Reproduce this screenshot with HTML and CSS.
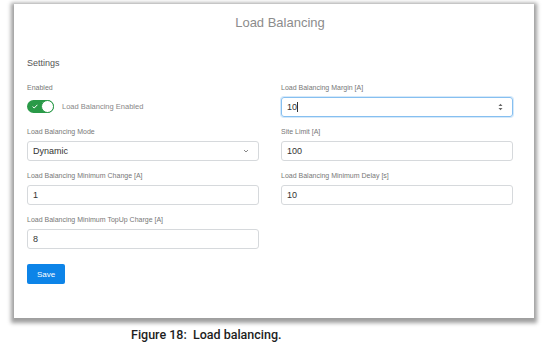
FILE: index.html
```html
<!DOCTYPE html>
<html lang="en">
<head>
  <meta charset="UTF-8">
  <meta name="viewport" content="width=device-width, initial-scale=1.0">
  <title>Load Balancing</title>
  <link rel="stylesheet" href="styles.css">
</head>
<body>
  <div class="card">
    <h1 class="title">Load Balancing</h1>
    <h2 class="section">Settings</h2>
    <div class="grid">
      <div class="field">
        <div class="label">Enabled</div>
        <div class="switch-row">
          <span class="switch">
            <svg class="check" width="6" height="5" viewBox="0 0 6 5"><path d="M0.6 2.6 L2.2 4 L5.4 0.8" fill="none" stroke="#fff" stroke-width="1"/></svg>
            <span class="knob"></span>
          </span>
          <span class="switch-text">Load Balancing Enabled</span>
        </div>
      </div>
      <div class="field">
        <div class="label">Load Balancing Margin [A]</div>
        <div class="control focus">
          <span>10<span class="caret"></span></span>
          <svg class="spin" width="5" height="8" viewBox="0 0 5 8"><path d="M0.5 3 L2.5 0.8 L4.5 3 Z M0.5 5 L2.5 7.2 L4.5 5 Z" fill="#666"/></svg>
        </div>
      </div>
      <div class="field">
        <div class="label">Load Balancing Mode</div>
        <div class="control">
          <span>Dynamic</span>
          <svg class="chevron" width="6" height="4" viewBox="0 0 6 4"><path d="M1 1 L3 3 L5 1" fill="none" stroke="#888" stroke-width="1"/></svg>
        </div>
      </div>
      <div class="field">
        <div class="label">Site Limit [A]</div>
        <div class="control"><span>100</span></div>
      </div>
      <div class="field">
        <div class="label">Load Balancing Minimum Change [A]</div>
        <div class="control"><span>1</span></div>
      </div>
      <div class="field">
        <div class="label">Load Balancing Minimum Delay [s]</div>
        <div class="control"><span>10</span></div>
      </div>
      <div class="field">
        <div class="label">Load Balancing Minimum TopUp Charge [A]</div>
        <div class="control"><span>8</span></div>
      </div>
    </div>
    <button class="btn">Save</button>
  </div>
  <p class="caption">Figure 18:&nbsp; Load balancing.</p>
</body>
</html>
```

FILE: styles.css
```css
body {
  font-family: "Liberation Sans", Arial, sans-serif;
  background-color: #fff;
  margin: 0;
}
.card {
  background: #fff;
  margin: 4px 14px 0;
  height: 314px;
  box-sizing: border-box;
  padding: 12px 21px 0 13px;
  box-shadow: 0 2px 4px 3px rgba(0, 0, 0, 0.38);
}
.title {
  margin: 0;
  padding-left: 20px;
  font-size: 13px;
  line-height: 14px;
  font-weight: normal;
  color: #8c8c8c;
  text-align: center;
}
.section {
  margin: 28px 0 0;
  font-size: 9px;
  line-height: 10px;
  font-weight: normal;
  color: #555;
}
.grid {
  display: grid;
  grid-template-columns: 232px 232px;
  column-gap: 22px;
  row-gap: 10px;
  margin-top: 15px;
}
.label {
  font-size: 7px;
  line-height: 10px;
  color: #777;
  margin-bottom: 4px;
}
.control {
  height: 20px;
  box-sizing: border-box;
  border: 1px solid #d6d9dc;
  border-radius: 3px;
  display: flex;
  align-items: center;
  justify-content: space-between;
  padding: 0 9px 0 5px;
  font-size: 9px;
  color: #333;
}
.control.focus {
  border-color: #86bff0;
  box-shadow: 0 0 0 1px rgba(134, 191, 240, 0.35);
}
.caret {
  display: inline-block;
  width: 1px;
  height: 10px;
  background: #333;
  vertical-align: -2px;
}
.switch-row {
  display: flex;
  align-items: center;
  gap: 8px;
  margin-top: 7px;
}
.switch {
  position: relative;
  width: 27px;
  height: 13px;
  border-radius: 7px;
  background: #2a9a48;
  display: flex;
  align-items: center;
  padding-left: 5px;
  box-sizing: border-box;
}
.knob {
  position: absolute;
  right: 0;
  top: 0;
  width: 13px;
  height: 13px;
  box-sizing: border-box;
  border-radius: 50%;
  background: #fff;
  border: 1px solid #2a9a48;
}
.switch-text {
  font-size: 7.5px;
  color: #888;
}
.btn {
  margin-top: 15px;
  width: 38px;
  height: 20px;
  border: 0;
  border-radius: 2px;
  background: #0d84e8;
  color: #fff;
  font-family: "Liberation Sans", Arial, sans-serif;
  font-size: 8px;
  padding: 0;
}
.caption {
  margin: 9px 0 0 131px;
  font-family: Roboto, "Liberation Sans", sans-serif;
  font-weight: 500;
  font-size: 12.5px;
  color: #1e1e1e;
}
```
